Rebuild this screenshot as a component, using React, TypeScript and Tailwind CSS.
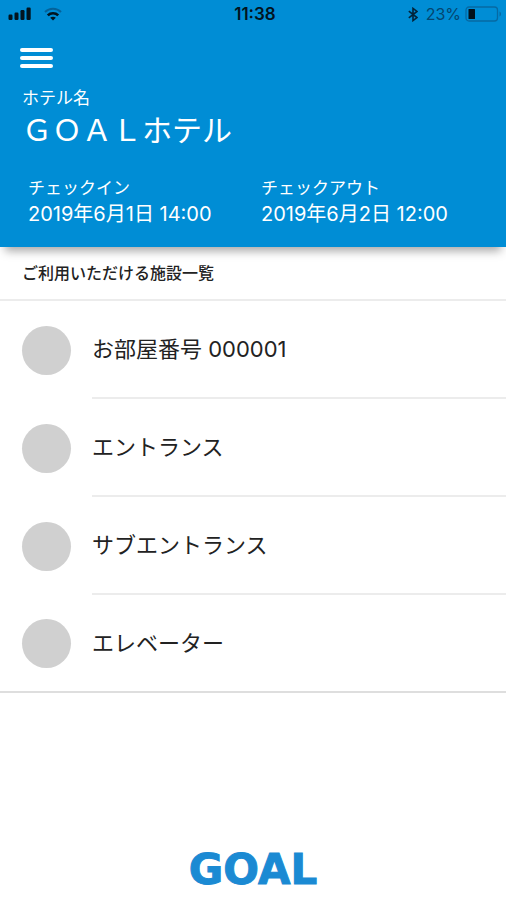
const hotel = {
  name: "ＧＯＡＬホテル",
  checkIn: "2019年6月1日 14:00",
  checkOut: "2019年6月2日 12:00",
};

const facilities = [
  { id: "room", name: "お部屋番号 000001" },
  { id: "entrance", name: "エントランス" },
  { id: "sub-entrance", name: "サブエントランス" },
  { id: "elevator", name: "エレベーター" },
];

function SignalIcon() {
  return (
    <svg width="24" height="14" viewBox="0 0 24 14" fill="#02141f" aria-hidden="true">
      <rect x="0.5" y="7.5" width="4" height="5.5" rx="1.2" />
      <rect x="6.5" y="5.5" width="4" height="7.5" rx="1.2" />
      <rect x="12.5" y="3" width="4" height="10" rx="1.2" />
      <rect x="18.5" y="0.5" width="4.2" height="12.5" rx="1.2" />
    </svg>
  );
}

function WifiIcon() {
  return (
    <svg width="18" height="14" viewBox="0 0 18 14" fill="none" aria-hidden="true">
      <path d="M1 5C5.4 .6 12.6 .6 17 5" stroke="#04629a" strokeWidth="2" />
      <path d="M3.8 8.4C6.6 5.6 11.4 5.6 14.2 8.4" stroke="#02141f" strokeWidth="2.6" />
      <path d="M9 13.4 6.2 10.7C7.8 9.4 10.2 9.4 11.8 10.7Z" fill="#02141f" />
    </svg>
  );
}

function BluetoothIcon() {
  return (
    <svg width="10" height="15" viewBox="0 0 10 15" fill="none" stroke="#02243a" strokeWidth="1.6" aria-hidden="true">
      <path d="M.8 4.2 9 10.6 5 13.6V1.4L9 4.4.8 10.8" />
    </svg>
  );
}

function BatteryIcon() {
  return (
    <svg width="37" height="16" viewBox="0 0 37 16" fill="none" aria-hidden="true">
      <rect x="1" y="1" width="31.5" height="14" rx="3" stroke="#0669a3" strokeWidth="1.3" />
      <rect x="3.5" y="3" width="6.5" height="10" rx="0.5" fill="#02101a" />
      <path d="M34.5 5.5c2 .8 2 4.2 0 5Z" fill="#0669a3" />
    </svg>
  );
}

function StatusBar() {
  return (
    <div className="grid h-7 grid-cols-3 items-center pr-1 pl-2 text-[#02141f]">
      <div className="flex items-center gap-3">
        <SignalIcon />
        <WifiIcon />
      </div>
      <time className="text-center text-[17px] leading-7 font-semibold">11:38</time>
      <div className="flex items-center justify-end gap-1">
        <BluetoothIcon />
        <span className="pl-1 text-base text-[#04466f]">23%</span>
        <BatteryIcon />
      </div>
    </div>
  );
}

function Stay({ label, date }: { label: string; date: string }) {
  return (
    <div>
      <dt className="text-[17px] leading-6">{label}</dt>
      <dd className="text-xl leading-7 whitespace-nowrap">{date}</dd>
    </div>
  );
}

function Header() {
  return (
    <header className="bg-[#008dd5] pb-[19px] text-white shadow-[0_9px_9px_-5px_rgba(0,0,0,0.35)]">
      <StatusBar />
      <button type="button" aria-label="メニュー" className="mt-5 ml-5 flex flex-col gap-1">
        <span className="h-1 w-[33px] rounded-xs bg-white" />
        <span className="h-1 w-[33px] rounded-xs bg-white" />
        <span className="h-1 w-[33px] rounded-xs bg-white" />
      </button>
      <div className="mt-4 px-[22px]">
        <p className="text-[17px] leading-7">ホテル名</p>
        <h1 className="text-3xl leading-9">{hotel.name}</h1>
      </div>
      <dl className="mt-7 grid grid-cols-2 pr-3 pl-7">
        <Stay label="チェックイン" date={hotel.checkIn} />
        <Stay label="チェックアウト" date={hotel.checkOut} />
      </dl>
    </header>
  );
}

function FacilityRow({ name }: { name: string }) {
  return (
    <li className="group flex">
      <div className="flex w-23 shrink-0 items-center pl-[22px]">
        <span className="size-[49px] rounded-full bg-[#d0d0d0]" />
      </div>
      <div className="flex h-[98px] flex-1 items-center border-b-2 border-[#ececec] text-[22px] group-last:h-24 group-last:border-b-0">
        {name}
      </div>
    </li>
  );
}

export default function App() {
  return (
    <div className="flex min-h-screen flex-col bg-white font-['Inter','Noto_Sans_CJK_JP',sans-serif] text-[#222222]">
      <Header />
      <main>
        <h2 className="border-b-2 border-[#ececec] px-[22px] py-3.5 text-base leading-6 font-medium">
          ご利用いただける施設一覧
        </h2>
        <ul className="border-b-2 border-[#dedede]">
          {facilities.map((facility) => (
            <FacilityRow key={facility.id} name={facility.name} />
          ))}
        </ul>
      </main>
      <footer className="mt-auto pb-1.5 text-center font-['DejaVu_Sans',sans-serif] text-[42px] leading-12 font-bold text-[#1b8ad3] [-webkit-text-stroke:1px_currentColor]">
        GOAL
      </footer>
    </div>
  );
}
